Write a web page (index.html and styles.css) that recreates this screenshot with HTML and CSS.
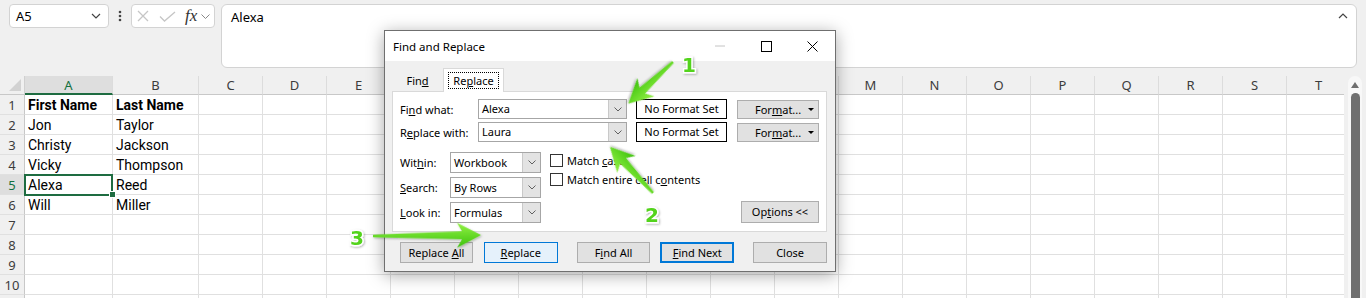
FILE: index.html
```html
<!DOCTYPE html>
<html lang="en">

<head>
    <meta charset="UTF-8">
    <meta name="viewport" content="width=device-width, initial-scale=1.0">
    <title>Find and Replace</title>
    <link rel="stylesheet" href="styles.css">
</head>

<body>
    <div class="toolbar">
        <div class="namebox">
            <span>A5</span>
            <svg class="chev" width="10" height="6" viewBox="0 0 10 6"><path d="M1 1 L5 5 L9 1" /></svg>
        </div>
        <div class="more">
            <svg width="4" height="12" viewBox="0 0 4 12">
                <circle cx="2" cy="2" r="1.3" />
                <circle cx="2" cy="6" r="1.3" />
                <circle cx="2" cy="10" r="1.3" />
            </svg>
        </div>
        <div class="fxbox">
            <svg class="cancel" width="12" height="12" viewBox="0 0 12 12"><path d="M1 1 L11 11 M11 1 L1 11" /></svg>
            <svg class="enter" width="17" height="11" viewBox="0 0 17 11"><path d="M1 5.5 L5.5 10 L16 1" /></svg>
            <span class="fx">fx</span>
            <svg class="chev small" width="9" height="5" viewBox="0 0 9 5"><path d="M0.5 0.5 L4.5 4.5 L8.5 0.5" /></svg>
        </div>
        <div class="formula">
            <span>Alexa</span>
            <svg class="caret" width="10" height="6" viewBox="0 0 10 6"><path d="M1 5 L5 1 L9 5" /></svg>
        </div>
    </div>

    <div class="sheet-area">
        <div class="sheet">
            <div class="grid" id="grid"></div>
        </div>
        <div class="vscroll">
            <span class="up"></span>
            <span class="thumb"></span>
        </div>
    </div>

    <div class="dialog">
        <div class="titlebar">
            <span>Find and Replace</span>
            <div class="caption">
                <span><svg width="10" height="2" viewBox="0 0 10 2"><path class="off" d="M0 1 H10" /></svg></span>
                <span><svg width="11" height="11" viewBox="0 0 11 11"><rect x="0.5" y="0.5" width="10" height="10" /></svg></span>
                <span><svg width="11" height="11" viewBox="0 0 11 11"><path d="M0.5 0.5 L10.5 10.5 M10.5 0.5 L0.5 10.5" /></svg></span>
            </div>
        </div>

        <div class="dlg-body">
            <div class="tabs">
                <div class="tab"><span>Fin<u>d</u></span></div>
                <div class="tab active"><span class="focus">Re<u>p</u>lace</span></div>
            </div>

            <div class="panel">
                <div class="row">
                    <span class="label">Fi<u>n</u>d what:</span>
                    <div class="combo wide"><span class="value">Alexa</span><span class="drop"><svg width="8" height="5" viewBox="0 0 8 5"><path d="M0.5 0.5 L4 4 L7.5 0.5" /></svg></span></div>
                    <div class="fmtbox">No Format Set</div>
                    <div class="fmtbtn">For<u>m</u>at...<span class="tri"></span></div>
                </div>
                <div class="row">
                    <span class="label">R<u>e</u>place with:</span>
                    <div class="combo wide"><span class="value">Laura</span><span class="drop"><svg width="8" height="5" viewBox="0 0 8 5"><path d="M0.5 0.5 L4 4 L7.5 0.5" /></svg></span></div>
                    <div class="fmtbox">No Format Set</div>
                    <div class="fmtbtn">For<u>m</u>at...<span class="tri"></span></div>
                </div>

                <div class="lower">
                    <div class="opts">
                        <div class="orow">
                            <span class="label">Wit<u>h</u>in:</span>
                            <div class="combo narrow"><span class="value">Workbook</span><span class="drop"><svg width="8" height="5" viewBox="0 0 8 5"><path d="M0.5 0.5 L4 4 L7.5 0.5" /></svg></span></div>
                        </div>
                        <div class="orow">
                            <span class="label"><u>S</u>earch:</span>
                            <div class="combo narrow"><span class="value">By Rows</span><span class="drop"><svg width="8" height="5" viewBox="0 0 8 5"><path d="M0.5 0.5 L4 4 L7.5 0.5" /></svg></span></div>
                        </div>
                        <div class="orow">
                            <span class="label"><u>L</u>ook in:</span>
                            <div class="combo narrow"><span class="value">Formulas</span><span class="drop"><svg width="8" height="5" viewBox="0 0 8 5"><path d="M0.5 0.5 L4 4 L7.5 0.5" /></svg></span></div>
                        </div>
                    </div>
                    <div class="checks">
                        <label class="check"><span class="box"></span><span>Match <u>c</u>ase</span></label>
                        <label class="check"><span class="box"></span><span>Match entire cell c<u>o</u>ntents</span></label>
                    </div>
                    <div class="btn options-btn">Op<u>t</u>ions &lt;&lt;</div>
                </div>
            </div>

            <div class="actions">
                <div class="btn first">Replace <u>A</u>ll</div>
                <div class="btn hover"><u>R</u>eplace</div>
                <div class="btn wide-gap">F<u>i</u>nd All</div>
                <div class="btn default"><u>F</u>ind Next</div>
                <div class="btn wide-gap">Close</div>
            </div>
        </div>
    </div>

    <svg class="callouts" width="1366" height="298" viewBox="0 0 1366 298">
        <defs>
            <linearGradient id="arrowFill" x1="0" y1="0" x2="0" y2="1">
                <stop offset="0" stop-color="#93f244" />
                <stop offset="1" stop-color="#3cc20c" />
            </linearGradient>
            <filter id="soft" x="-20%" y="-20%" width="140%" height="140%">
                <feDropShadow dx="1" dy="1" stdDeviation="1" flood-color="#000" flood-opacity="0.3" />
            </filter>
        </defs>
        <!-- 1: points at the Find what dropdown -->
        <polygon class="arrow" transform="translate(673 62) rotate(137)" points="0,-1.2 42,-4 37,-12.5 61,0 37,12.5 42,4 0,1.2" />
        <!-- 2: points at the Replace with dropdown -->
        <polygon class="arrow" transform="translate(653 193) rotate(227)" points="0,-1.2 44,-4 39,-12.5 63,0 39,12.5 44,4 0,1.2" />
        <!-- 3: points at the Replace button -->
        <polygon class="arrow" transform="translate(373 236) rotate(-0.5)" points="0,-1.2 89,-4 84,-12.5 108,0 84,12.5 89,4 0,1.2" />
        <text class="num" x="689" y="72">1</text>
        <text class="num" x="652" y="222">2</text>
        <text class="num" x="357" y="245">3</text>
    </svg>

    <script>
        const grid = document.getElementById("grid");
        const cols = "ABCDEFGHIJKLMNOPQRST".split("");
        const data = {
            1: ["First Name", "Last Name"],
            2: ["Jon", "Taylor"],
            3: ["Christy", "Jackson"],
            4: ["Vicky", "Thompson"],
            5: ["Alexa", "Reed"],
            6: ["Will", "Miller"]
        };

        function addCell(cls, text) {
            const div = document.createElement("div");
            div.className = cls;
            div.textContent = text || "";
            grid.appendChild(div);
            return div;
        }

        addCell("corner");
        cols.forEach(c => addCell(c === "A" ? "colhead sel" : "colhead", c));

        // row 11 only peeks in at the bottom edge, so its number is left out
        for (let r = 1; r <= 11; r++) {
            addCell(r === 5 ? "rowhead sel" : "rowhead", r < 11 ? r : "");
            const row = data[r] || [];
            cols.forEach((c, i) => {
                let cls = "cell";
                if (r === 1) cls += " bold";
                if (r === 5 && i === 0) cls += " active";
                addCell(cls, row[i]);
            });
        }
    </script>
</body>

</html>
```

FILE: styles.css
```css
body {
    margin: 0;
    width: 1366px;
    height: 298px;
    overflow: hidden;
    position: relative;
    background-color: #f0f0f0;
    font-family: "Noto Sans", sans-serif;
    color: #000;
}

/* formula bar */

.toolbar {
    display: flex;
    align-items: flex-start;
    padding: 4px 9px 0 9px;
    height: 64px;
    margin-bottom: 8px;
}

.namebox,
.fxbox,
.formula {
    box-sizing: border-box;
    background: white;
    border: 1px solid #d3d3d3;
    border-radius: 4px;
}

.namebox {
    width: 100px;
    height: 24px;
    display: flex;
    align-items: center;
    justify-content: space-between;
    padding: 0 7px 0 6px;
    font-size: 13px;
}

.chev path,
.caret path {
    fill: none;
    stroke: #444;
    stroke-width: 1.2;
}

.chev.small path {
    stroke: #888;
    stroke-width: 1;
}

.more {
    width: 22px;
    height: 24px;
    display: flex;
    align-items: center;
    justify-content: center;
}

.more circle {
    fill: #444;
}

.fxbox {
    width: 84px;
    height: 24px;
    display: flex;
    align-items: center;
    padding-left: 5px;
}

.fxbox .cancel path,
.fxbox .enter path {
    fill: none;
    stroke: #c6c6c6;
    stroke-width: 1.3;
}

.fxbox .enter {
    margin-left: 10px;
}

.fx {
    margin-left: 9px;
    font-family: "Liberation Serif", serif;
    font-style: italic;
    font-size: 17px;
    color: #333;
    line-height: 20px;
}

.fxbox .chev {
    margin-left: 4px;
}

.formula {
    flex: 1;
    height: 64px;
    margin-left: 6px;
    border-radius: 6px;
    padding: 2px 9px;
    font-size: 13px;
    line-height: 20px;
    position: relative;
}

.caret {
    position: absolute;
    right: 8px;
    top: 8px;
}

/* sheet */

.sheet-area {
    display: flex;
    height: 222px;
}

.sheet {
    width: 1344px;
    overflow: hidden;
}

.grid {
    display: grid;
    grid-template-columns: 25px 88px 86px repeat(18, 64px);
    grid-template-rows: 19px;
    grid-auto-rows: 20px;
    width: max-content;
}

.grid > div {
    box-sizing: border-box;
}

.corner {
    position: relative;
    border-right: 1px solid #d0d0d0;
    border-bottom: 1px solid #c8c8c8;
}

.corner::after {
    content: "";
    position: absolute;
    right: 3px;
    bottom: 3px;
    border-left: 12px solid transparent;
    border-bottom: 12px solid #d2d2d2;
}

.colhead,
.rowhead {
    font-size: 13px;
    color: #3c3c3c;
    text-align: center;
    line-height: 18px;
}

.colhead {
    border-right: 1px solid #dcdcdc;
    border-bottom: 1px solid #c8c8c8;
}

.rowhead {
    border-right: 1px solid #c8c8c8;
    border-bottom: 1px solid #e0e0e0;
    line-height: 20px;
}

.colhead.sel,
.rowhead.sel {
    background: #dedede;
    color: #137040;
}

.colhead.sel {
    border-bottom: 2px solid #1e6c41;
}

.cell {
    background: white;
    border-right: 1px solid #e0e0e0;
    border-bottom: 1px solid #e0e0e0;
    font-family: Roboto, sans-serif;
    font-size: 14px;
    line-height: 20px;
    padding-left: 3px;
    white-space: nowrap;
}

.cell.bold {
    font-weight: bold;
}

.cell.active {
    position: relative;
    z-index: 1;
}

.cell.active::after {
    content: "";
    position: absolute;
    left: -1px;
    top: -1px;
    right: -1px;
    bottom: -2px;
    border: 2px solid #1e6c41;
}

.cell.active::before {
    content: "";
    position: absolute;
    right: -4px;
    bottom: -4px;
    width: 5px;
    height: 5px;
    background: #1e6c41;
    border: 1px solid white;
    z-index: 2;
}

.vscroll {
    width: 14px;
    margin-left: 4px;
    background: #f8f8f8;
    border-radius: 7px 7px 0 0;
    display: flex;
    flex-direction: column;
    align-items: center;
}

.vscroll .up {
    margin-top: 6px;
    border-left: 4px solid transparent;
    border-right: 4px solid transparent;
    border-bottom: 6px solid #6f6f6f;
}

.vscroll .thumb {
    margin-top: 5px;
    flex: 1;
    width: 9px;
    background: #6f6f6f;
    border-radius: 5px 5px 0 0;
}

/* dialog */

.dialog {
    position: absolute;
    left: 384px;
    top: 30px;
    width: 452px;
    height: 242px;
    box-sizing: border-box;
    border: 1px solid #6f6f6f;
    background: #f0f0f0;
    box-shadow: 0 3px 16px rgba(0, 0, 0, 0.35);
    font-size: 11px;
    z-index: 5;
}

.titlebar {
    height: 30px;
    background: white;
    display: flex;
    align-items: center;
    padding-left: 8px;
    font-size: 11.5px;
}

.caption {
    margin-left: auto;
    display: flex;
}

.caption span {
    width: 46px;
    height: 30px;
    display: flex;
    align-items: center;
    justify-content: center;
}

.caption path,
.caption rect {
    fill: none;
    stroke: #000;
    stroke-width: 1;
}

.caption path.off {
    stroke: #c4c4c4;
}

.dlg-body {
    padding: 7px 8px 0 7px;
}

.tabs {
    display: flex;
    align-items: flex-end;
    height: 23px;
    position: relative;
    z-index: 1;
}

.tab {
    width: 51px;
    height: 21px;
    display: flex;
    align-items: center;
    justify-content: center;
}

.tab.active {
    width: 61px;
    height: 24px;
    margin-bottom: -1px;
    box-sizing: border-box;
    background: white;
    border: 1px solid #d9d9d9;
    border-bottom: none;
}

.focus {
    outline: 1px dotted #000;
    outline-offset: 1px;
    padding: 0 3px;
    line-height: 13px;
}

.panel {
    height: 141px;
    box-sizing: border-box;
    background: white;
    border: 1px solid #d9d9d9;
    padding: 7px 7px 0 7px;
}

.row {
    display: flex;
    align-items: center;
    height: 20px;
}

.row + .row {
    margin-top: 3px;
}

.row .label {
    width: 78px;
}

.combo {
    display: flex;
    box-sizing: border-box;
    height: 20px;
    border: 1px solid #a6a6a6;
    background: white;
}

.combo .value {
    flex: 1;
    padding-left: 3px;
    line-height: 18px;
}

.combo .drop {
    width: 17px;
    background: #e3e3e3;
    border-left: 1px solid #c9c9c9;
    display: flex;
    align-items: center;
    justify-content: center;
}

.combo .drop path {
    fill: none;
    stroke: #606060;
    stroke-width: 1;
}

.combo.wide {
    width: 149px;
}

.fmtbox {
    margin-left: 9px;
    width: 91px;
    height: 20px;
    box-sizing: border-box;
    border: 1px solid #000;
    text-align: center;
    line-height: 18px;
}

.fmtbtn {
    margin-left: 10px;
    width: 82px;
    height: 19px;
    box-sizing: border-box;
    background: #e1e1e1;
    border: 1px solid #adadad;
    padding-left: 17px;
    line-height: 17px;
    position: relative;
}

.fmtbtn .tri {
    position: absolute;
    right: 4px;
    top: 7px;
    border-left: 3px solid transparent;
    border-right: 3px solid transparent;
    border-top: 3px solid #000;
}

.lower {
    display: flex;
    margin-top: 10px;
}

.orow {
    display: flex;
    align-items: center;
    height: 21px;
}

.orow + .orow {
    margin-top: 4px;
}

.orow .label {
    width: 50px;
}

.combo.narrow {
    width: 91px;
    height: 21px;
}

.combo.narrow .value {
    line-height: 19px;
}

.checks {
    margin-left: 9px;
    padding-top: 2px;
}

.check {
    display: flex;
    align-items: center;
    height: 13px;
    gap: 4px;
}

.check + .check {
    margin-top: 6px;
}

.box {
    width: 13px;
    height: 13px;
    box-sizing: border-box;
    border: 1px solid #333;
    background: white;
}

.btn {
    height: 21px;
    width: 74px;
    box-sizing: border-box;
    background: #e1e1e1;
    border: 1px solid #adadad;
    text-align: center;
    line-height: 19px;
}

.options-btn {
    margin-left: auto;
    align-self: flex-end;
    width: 78px;
    height: 22px;
    line-height: 20px;
}

.actions {
    display: flex;
    margin-top: 10px;
    padding-left: 8px;
}

.actions .btn {
    margin-left: 10px;
}

.actions .btn.first {
    margin-left: 0;
    width: 73px;
}

.actions .btn.hover {
    margin-left: 11px;
    background: #e5f1fb;
    border-color: #0078d7;
}

.actions .btn.wide-gap {
    margin-left: 19px;
}

.actions .btn.default {
    border: 2px solid #0078d7;
    line-height: 17px;
}

/* callout arrows */

.callouts {
    position: absolute;
    left: 0;
    top: 0;
    z-index: 10;
    pointer-events: none;
}

.arrow {
    fill: url(#arrowFill);
    filter: url(#soft);
}

.num {
    font-family: "DejaVu Sans", sans-serif;
    font-weight: bold;
    font-size: 20px;
    text-anchor: middle;
    fill: #52d31a;
    stroke: white;
    stroke-width: 3px;
    paint-order: stroke;
    filter: url(#soft);
}
```
